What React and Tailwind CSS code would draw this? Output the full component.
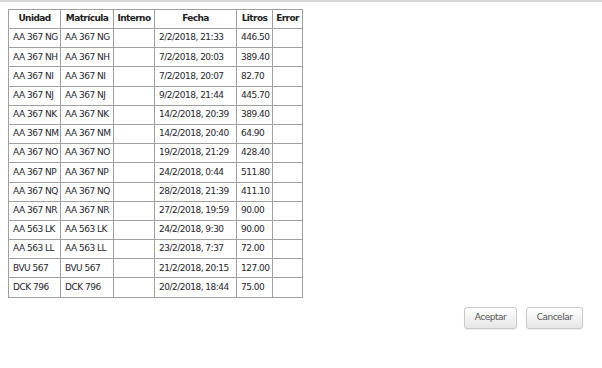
const rows = [
  ['AA 367 NG', 'AA 367 NG', '', '2/2/2018, 21:33', '446.50'],
  ['AA 367 NH', 'AA 367 NH', '', '7/2/2018, 20:03', '389.40'],
  ['AA 367 NI', 'AA 367 NI', '', '7/2/2018, 20:07', '82.70'],
  ['AA 367 NJ', 'AA 367 NJ', '', '9/2/2018, 21:44', '445.70'],
  ['AA 367 NK', 'AA 367 NK', '', '14/2/2018, 20:39', '389.40'],
  ['AA 367 NM', 'AA 367 NM', '', '14/2/2018, 20:40', '64.90'],
  ['AA 367 NO', 'AA 367 NO', '', '19/2/2018, 21:29', '428.40'],
  ['AA 367 NP', 'AA 367 NP', '', '24/2/2018, 0:44', '511.80'],
  ['AA 367 NQ', 'AA 367 NQ', '', '28/2/2018, 21:39', '411.10'],
  ['AA 367 NR', 'AA 367 NR', '', '27/2/2018, 19:59', '90.00'],
  ['AA 563 LK', 'AA 563 LK', '', '24/2/2018, 9:30', '90.00'],
  ['AA 563 LL', 'AA 563 LL', '', '23/2/2018, 7:37', '72.00'],
  ['BVU 567', 'BVU 567', '', '21/2/2018, 20:15', '127.00'],
  ['DCK 796', 'DCK 796', '', '20/2/2018, 18:44', '75.00'],
]

const headers = ['Unidad', 'Matrícula', 'Interno', 'Fecha', 'Litros', 'Error']
const widths = ['w-[52px]', 'w-[53px]', 'w-[41px]', 'w-[82px]', 'w-[36px]', 'w-[30px]']

export default function App() {
  return (
    <div className="w-[602px] h-[368px] bg-white text-[#26262e] text-[9px] tracking-[-0.5px] font-['DejaVu_Sans',sans-serif] overflow-hidden">
      <div className="h-[2px] bg-[#d6d6d6]" />
      <div className="pt-[7px] pl-[8px]">
        <table className="border-collapse table-fixed w-[295px]">
          <colgroup>
            {widths.map((w, i) => <col key={i} className={w} />)}
          </colgroup>
          <thead>
            <tr className="h-[19px]">
              {headers.map(h => (
                <th key={h} className="border border-[#a0a0a0] px-[3px] font-bold text-center text-[#222] whitespace-nowrap tracking-[-0.6px]">{h}</th>
              ))}
            </tr>
          </thead>
          <tbody>
            {rows.map((r, i) => (
              <tr key={i} className="h-[19.2px]">
                {r.map((c, j) => (
                  <td key={j} className="border border-[#a0a0a0] pl-[4px] pr-[2px] text-left whitespace-nowrap">{c}</td>
                ))}
                <td className="border border-[#a0a0a0]" />
              </tr>
            ))}
          </tbody>
        </table>
      </div>
      <div className="flex justify-end gap-[9px] pr-[19px] pt-[9px]">
        <button className="w-[53px] h-[22px] rounded-[3px] border border-[#c8c8c8] bg-gradient-to-b from-white to-[#e6e6e6] text-[#555] shadow-[0_1px_1px_rgba(0,0,0,0.08)]">Aceptar</button>
        <button className="w-[57px] h-[22px] rounded-[3px] border border-[#c8c8c8] bg-gradient-to-b from-white to-[#e6e6e6] text-[#555] shadow-[0_1px_1px_rgba(0,0,0,0.08)]">Cancelar</button>
      </div>
    </div>
  )
}
